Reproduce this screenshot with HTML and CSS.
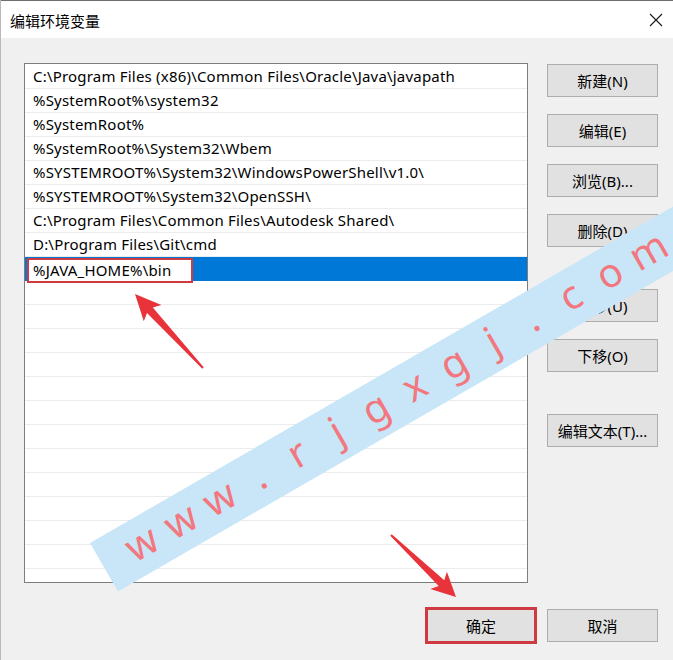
FILE: index.html
```html
<!DOCTYPE html>
<html lang="zh-CN">
<head>
<meta charset="utf-8">
<title>编辑环境变量</title>
<link rel="stylesheet" href="styles.css">
</head>
<body>
<div class="window">
  <div class="titlebar">
    <span class="title">编辑环境变量</span>
    <span class="close"><svg width="14" height="14" viewBox="0 0 14 14"><path d="M1 1L13 13M13 1L1 13" stroke="#1a1a1a" stroke-width="1.1" fill="none"/></svg></span>
  </div>
  <div class="content">
    <div class="main">
      <div class="list">
        <div class="row">C:\Program Files (x86)\Common Files\Oracle\Java\javapath</div>
        <div class="row">%SystemRoot%\system32</div>
        <div class="row">%SystemRoot%</div>
        <div class="row">%SystemRoot%\System32\Wbem</div>
        <div class="row">%SYSTEMROOT%\System32\WindowsPowerShell\v1.0\</div>
        <div class="row">%SYSTEMROOT%\System32\OpenSSH\</div>
        <div class="row">C:\Program Files\Common Files\Autodesk Shared\</div>
        <div class="row">D:\Program Files\Git\cmd</div>
        <div class="row selected"><span class="edit">%JAVA_HOME%\bin</span></div>
        <div class="row"></div>
        <div class="row"></div>
        <div class="row"></div>
        <div class="row"></div>
        <div class="row"></div>
        <div class="row"></div>
        <div class="row"></div>
        <div class="row"></div>
        <div class="row"></div>
        <div class="row"></div>
        <div class="row"></div>
        <div class="row"></div>
      </div>
      <div class="side">
        <button class="btn">新建(N)</button>
        <button class="btn">编辑(E)</button>
        <button class="btn">浏览(B)...</button>
        <button class="btn">删除(D)</button>
        <button class="btn gap">上移(U)</button>
        <button class="btn">下移(O)</button>
        <button class="btn gap">编辑文本(T)...</button>
      </div>
    </div>
    <div class="footer">
      <button class="btn ok">确定</button>
      <button class="btn">取消</button>
    </div>
  </div>
</div>
<div class="watermark"><span>w</span><span>w</span><span>w</span><span>.</span><span>r</span><span>j</span><span>g</span><span>x</span><span>g</span><span>j</span><span>.</span><span>c</span><span>o</span><span>m</span></div>
<svg class="arrows" width="673" height="660" viewBox="0 0 673 660">
  <polygon fill="#e8333b" points="135,294 161.4,305 152.8,307.5 203.7,367.3 202.3,368.7 147,312.9 143.8,321.2"/>
  <polygon fill="#e8333b" points="456,597 430.3,589.1 438.7,586.1 390.3,535.7 391.7,534.3 444.3,580.3 446.9,571.7"/>
</svg>
</body>
</html>
```
FILE: styles.css
```css
html, body {
  margin: 0;
  padding: 0;
}
body {
  width: 673px;
  height: 660px;
  overflow: hidden;
  position: relative;
  background: #f0f0f0;
  font-family: "Noto Sans", "Noto Sans CJK SC", sans-serif;
  color: #000;
}
.window {
  height: 660px;
  box-sizing: border-box;
  border-left: 1px solid #b9b9b9;
  display: flex;
  flex-direction: column;
}
.titlebar {
  height: 37px;
  border-top: 1px solid #6e6e6e;
  background: #fff;
  display: flex;
  align-items: center;
  justify-content: space-between;
  padding: 0 10px 0 9px;
}
.title {
  font-family: "Noto Sans CJK SC", sans-serif;
  font-size: 15px;
  margin-top: 2px;
}
.close {
  display: flex;
  margin-top: 1px;
}
.content {
  flex: 1;
  display: flex;
  flex-direction: column;
  padding: 25px 15px 0 23px;
}
.main {
  display: flex;
  gap: 19px;
}
.list {
  width: 504px;
  height: 520px;
  box-sizing: border-box;
  border: 1px solid #7d7d7d;
  background: #fff;
  padding-top: 1px;
  overflow: hidden;
}
.row {
  height: 24px;
  box-sizing: border-box;
  border-bottom: 1px solid #ececec;
  padding-left: 8px;
  font-size: 15px;
  letter-spacing: 0.2px;
  line-height: 23px;
  white-space: nowrap;
}
.row.selected {
  background: #0078d7;
  border-bottom-color: #0078d7;
  padding-left: 2px;
}
.edit {
  display: inline-block;
  vertical-align: top;
  box-sizing: border-box;
  width: 166px;
  height: 25px;
  margin-top: 1px;
  border: 2px solid #cf3a41;
  background: #fff;
  padding-left: 4px;
  line-height: 20px;
}
.side {
  width: 111px;
  display: flex;
  flex-direction: column;
  gap: 17px;
  padding-top: 1px;
}
.btn {
  height: 33px;
  box-sizing: border-box;
  background: #e1e1e1;
  border: 1px solid #adadad;
  font-family: "Noto Sans", "Noto Sans CJK SC", sans-serif;
  font-size: 15px;
  color: #000;
  padding: 0;
  margin: 0;
}
.side .gap {
  margin-top: 25px;
}
.footer {
  display: flex;
  justify-content: flex-end;
  align-items: center;
  gap: 10px;
  padding-top: 24px;
}
.footer .btn {
  width: 111px;
}
.footer .ok {
  width: 112px;
  height: 37px;
  border: 3px solid #cf3a41;
}
.watermark {
  position: absolute;
  left: 90px;
  top: 543px;
  width: 720px;
  height: 56px;
  box-sizing: border-box;
  padding-left: 22px;
  background: #c8e6f7;
  transform-origin: 0 0;
  transform: rotate(-30deg);
  display: flex;
  color: #f2777e;
  font-family: "Noto Sans", sans-serif;
  font-size: 40px;
  line-height: 50px;
}
.watermark span {
  flex: none;
  width: 45px;
  text-align: center;
}
.arrows {
  position: absolute;
  left: 0;
  top: 0;
  pointer-events: none;
}
```
